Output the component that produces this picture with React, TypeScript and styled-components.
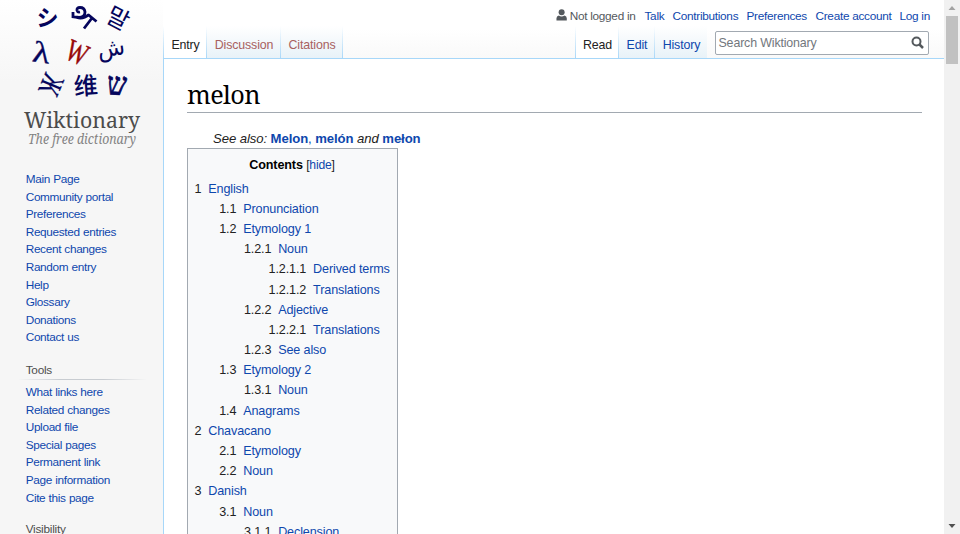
import React from "react";
import styled, { createGlobalStyle } from "styled-components";

const LINK = "#0e47ad";
const RED = "#a8615f";

const GlobalStyle = createGlobalStyle`
  * { box-sizing: border-box; }
  html, body { margin: 0; height: 534px; overflow: hidden; background: #fff; }
  body { font-family: "Liberation Sans", Arial, sans-serif; color: #222; }
`;

const Page = styled.div`
  display: flex;
  width: 960px;
  height: 534px;
  overflow: hidden;
  background: linear-gradient(#ffffff 0, #f6f6f6 82px);
`;

const Sidebar = styled.aside`
  flex: 0 0 163px;
  height: 534px;
  overflow: hidden;
`;

const Logo = styled.svg`
  display: block;
  width: 163px;
  height: 160px;
`;

const NavGroup = styled.nav<{ $top: number }>`
  display: flex;
  flex-direction: column;
  margin-top: ${(p) => p.$top}px;
  padding-left: 25.7px;
`;

const NavHeading = styled.h3`
  margin: 0 16px 4px -8px;
  padding-left: 8px;
  height: 19px;
  font-size: 11.8px;
  letter-spacing: -0.25px;
  font-weight: 400;
  line-height: 18px;
  color: #4d4d4d;
  background: linear-gradient(to right, rgba(200, 204, 209, 0), #c8ccd1 33%, #c8ccd1 66%, rgba(200, 204, 209, 0)) bottom / 100% 1px no-repeat;
`;

const NavLink = styled.a`
  height: 17.6px;
  font-size: 11.8px;
  line-height: 17.6px;
  letter-spacing: -0.33px;
  word-spacing: 0.3px;
  white-space: nowrap;
  color: ${LINK};
`;

const Main = styled.div`
  flex: 0 0 781px;
  display: flex;
  flex-direction: column;
`;

const Header = styled.header`
  flex: 0 0 58px;
  display: flex;
  flex-direction: column;
  background: linear-gradient(#ffffff 50%, #f9f9f9 100%);
`;

const Personal = styled.div`
  display: flex;
  justify-content: flex-end;
  height: 26px;
  padding: 8px 14.5px 0 0;
  gap: 9px;
  font-size: 11.8px;
  letter-spacing: -0.29px;
  line-height: 17px;
  color: ${LINK};
  white-space: nowrap;
`;

const PersonalItem = styled.span<{ $width: number; $muted?: boolean }>`
  display: flex;
  width: ${(p) => p.$width}px;
  color: ${(p) => (p.$muted ? "#54595d" : LINK)};
`;

const UserIcon = styled.svg`
  width: 12px;
  height: 13px;
  margin: 0 3px 0 0;
`;

const TabsBar = styled.div`
  display: flex;
  height: 32px;
`;

const Rule = styled.i`
  flex: 0 0 1px;
  height: 33px;
  background: linear-gradient(rgba(167, 215, 249, 0), #a7d7f9);
`;

const Tab = styled.a<{ $width: number; $active?: boolean; $color: string }>`
  flex: 0 0 ${(p) => p.$width}px;
  height: ${(p) => (p.$active ? 33 : 32)}px;
  padding: 10px 0 0 1px;
  text-align: center;
  font-size: 12.4px;
  letter-spacing: -0.14px;
  line-height: 18px;
  white-space: nowrap;
  color: ${(p) => p.$color};
  background: ${(p) => (p.$active ? "linear-gradient(#fff, #fff)" : "linear-gradient(#ffffff, #e8f2f8)")};
`;

const Spacer = styled.div`
  flex: 1;
`;

const Search = styled.div`
  display: flex;
  align-items: center;
  justify-content: space-between;
  width: 214px;
  height: 24px;
  margin: 5px 15px 0 8px;
  padding: 0 4px 1px 2.5px;
  border: 1px solid #a2a9b1;
  border-radius: 2px;
  background: #fff;
  font-size: 12.4px;
  letter-spacing: -0.14px;
  color: #72777d;
`;

const SearchIcon = styled.svg`
  width: 13px;
  height: 13px;
`;

const Content = styled.main`
  flex: 1;
  min-height: 0;
  overflow: hidden;
  padding: 17px 22px 0 23px;
  background: #fff;
  border-top: 1px solid #a7d7f9;
  border-left: 1px solid #a7d7f9;
`;

const Title = styled.h1`
  margin: 0;
  height: 37px;
  border-bottom: 1px solid #a2a9b1;
  font-family: "Noto Serif", "Liberation Serif", serif;
  font-weight: 400;
  font-size: 25.2px;
  letter-spacing: -0.6px;
  line-height: 37px;
  color: #000;
`;

const SeeAlso = styled.p`
  margin: 16px 0 0 26px;
  height: 19px;
  font-size: 13.13px;
  letter-spacing: -0.08px;
  line-height: 19px;
  font-style: italic;
  white-space: nowrap;

  b { font-style: normal; color: ${LINK}; }
  span { font-style: normal; color: ${LINK}; }
`;

const Toc = styled.section`
  width: 210.5px;
  height: 420px;
  padding: 7px 7px 0 6.5px;
  border: 1px solid #a2a9b1;
  background: #f8f9fa;
  font-size: 12.6px;
  letter-spacing: -0.13px;
`;

const TocTitle = styled.div`
  height: 22.6px;
  text-align: center;
  line-height: 19px;
  color: #000;

  small { font-size: 12.2px; letter-spacing: -0.2px; color: #222; }
  a { color: ${LINK}; }
`;

const TocRow = styled.div<{ $level: number }>`
  display: flex;
  height: 20.2px;
  padding-left: ${(p) => p.$level * 24.7}px;
  line-height: 21px;
  white-space: nowrap;
  color: #222;
  gap: 6.9px;

  a { color: ${LINK}; }
`;

const Scrollbar = styled.div`
  flex: 0 0 16px;
  display: flex;
  flex-direction: column;
  justify-content: space-between;
  background: #f1f1f1;
`;

const ScrollTop = styled.div`
  display: flex;
  flex-direction: column;
  align-items: center;
`;

const Thumb = styled.div`
  width: 12px;
  height: 48px;
  background: #c1c1c1;
`;

const Arrow = styled.svg`
  display: block;
  width: 16px;
  height: 16px;
`;

type Entry = [level: number, number: string, label: string];

const contents: Entry[] = [
  [0, "1", "English"],
  [1, "1.1", "Pronunciation"],
  [1, "1.2", "Etymology 1"],
  [2, "1.2.1", "Noun"],
  [3, "1.2.1.1", "Derived terms"],
  [3, "1.2.1.2", "Translations"],
  [2, "1.2.2", "Adjective"],
  [3, "1.2.2.1", "Translations"],
  [2, "1.2.3", "See also"],
  [1, "1.3", "Etymology 2"],
  [2, "1.3.1", "Noun"],
  [1, "1.4", "Anagrams"],
  [0, "2", "Chavacano"],
  [1, "2.1", "Etymology"],
  [1, "2.2", "Noun"],
  [0, "3", "Danish"],
  [1, "3.1", "Noun"],
  [2, "3.1.1", "Declension"],
];

const mainLinks = ["Main Page", "Community portal", "Preferences", "Requested entries", "Recent changes", "Random entry", "Help", "Glossary", "Donations", "Contact us"];
const toolLinks = ["What links here", "Related changes", "Upload file", "Special pages", "Permanent link", "Page information", "Cite this page"];

interface Glyph {
  char: string;
  x: number;
  y: number;
  size: number;
  angle: number;
  font: string;
  weight?: number;
  fill?: string;
  stretch?: [number, number];
  outline?: number;
}

const NAVY = "#05055c";
const glyphs: Glyph[] = [
  { char: "シ", x: 47.5, y: 18.5, size: 23, angle: 4, font: '"Noto Sans CJK JP", sans-serif', weight: 700, stretch: [0.95, 1] },
  { char: "말", x: 118, y: 18.5, size: 24, angle: 27, font: '"Noto Sans CJK KR", sans-serif' },
  { char: "λ", x: 41.5, y: 52, size: 30, angle: 8, font: '"Liberation Serif", serif', outline: 0.3, stretch: [1.2, 1] },
  { char: "W", x: 77.5, y: 52, size: 25, angle: 24, font: '"Liberation Serif", serif', fill: "#980808", stretch: [0.9, 1.25], outline: 0.4 },
  { char: "ش", x: 111, y: 47.5, size: 25, angle: -8, font: '"DejaVu Sans", sans-serif', stretch: [0.9, 0.95] },
  { char: "Ж", x: 52, y: 85, size: 25, angle: 113, font: '"Liberation Serif", serif', stretch: [0.9, 1.25], outline: 0.2 },
  { char: "维", x: 86, y: 86, size: 24, angle: -4, font: '"Noto Sans CJK SC", sans-serif', weight: 500 },
  { char: "ש", x: 117, y: 83.5, size: 29, angle: 3, font: '"Liberation Serif", serif', outline: 0.7, stretch: [0.95, 1.1] },
];

function WikiLogo() {
  return (
    <Logo viewBox="0 0 163 160">
      {glyphs.map((g) => (
        <text
          key={g.char}
          x={0}
          y={g.size * 0.35}
          transform={`translate(${g.x} ${g.y}) rotate(${g.angle}) scale(${(g.stretch ?? [1, 1]).join(" ")})`}
          textAnchor="middle"
          fontFamily={g.font}
          fontSize={g.size}
          fontWeight={g.weight ?? 400}
          fill={g.fill ?? NAVY}
          stroke={g.fill ?? NAVY}
          strokeWidth={g.outline ?? 0}
        >
          {g.char}
        </text>
      ))}
      <g fill="none" stroke={NAVY} strokeWidth="2.8">
        <path d="M73 12v6M72 16.500l7 1q6-.5 6-5.500q-.5-4.500-5-4.500q-3.500 0-3 3q.5 2 3 1.500" />
        <path d="M77 17.500q6 2 12-3M88 14.500l8.500 7M92 18l-8 10.500" />
      </g>
      <text x="24" y="127.5" fontFamily='"Noto Serif", "Liberation Serif", serif' fontSize="22" fill="#4c4c4c" textLength="116" lengthAdjust="spacingAndGlyphs">Wiktionary</text>
      <text x="28" y="143.500" fontFamily='"Noto Serif", "Liberation Serif", serif' fontStyle="italic" fontSize="14" fill="#848484" textLength="108" lengthAdjust="spacingAndGlyphs">The free dictionary</text>
    </Logo>
  );
}

export default function App() {
  return (
    <>
      <GlobalStyle />
      <Page>
        <Sidebar>
          <WikiLogo />
          <NavGroup $top={11}>
            {mainLinks.map((label) => <NavLink key={label}>{label}</NavLink>)}
          </NavGroup>
          <NavGroup $top={14}>
            <NavHeading>Tools</NavHeading>
            {toolLinks.map((label) => <NavLink key={label}>{label}</NavLink>)}
          </NavGroup>
          <NavGroup $top={13}>
            <NavHeading>Visibility</NavHeading>
          </NavGroup>
        </Sidebar>
        <Main>
          <Header>
            <Personal>
              <PersonalItem $width={80} $muted>
                <UserIcon viewBox="0 0 12 13" fill="#54595d">
                  <circle cx="6" cy="4" r="3.200" />
                  <path d="M.5 13V10.500Q.5 8 3 7.500Q6 9.500 9 7.500Q11.500 8 11.500 10.500V13Z" />
                </UserIcon>
                Not logged in
              </PersonalItem>
              <PersonalItem $width={19}>Talk</PersonalItem>
              <PersonalItem $width={65}>Contributions</PersonalItem>
              <PersonalItem $width={60}>Preferences</PersonalItem>
              <PersonalItem $width={75}>Create account</PersonalItem>
              <PersonalItem $width={30}>Log in</PersonalItem>
            </Personal>
            <TabsBar>
              <Rule />
              <Tab $width={42} $active $color="#222">Entry</Tab>
              <Rule />
              <Tab $width={73} $color={RED}>Discussion</Tab>
              <Rule />
              <Tab $width={61} $color={RED}>Citations</Tab>
              <Rule />
              <Spacer />
              <Rule />
              <Tab $width={42} $active $color="#222">Read</Tab>
              <Rule />
              <Tab $width={35} $color={LINK}>Edit</Tab>
              <Rule />
              <Tab $width={52} $color={LINK}>History</Tab>
              <Search>
                Search Wiktionary
                <SearchIcon viewBox="0 0 13 13" fill="none" stroke="#54595d" strokeWidth="2">
                  <circle cx="5.500" cy="5.500" r="4" />
                  <path d="M8.500 8.500L12 12" strokeWidth="2.500" />
                </SearchIcon>
              </Search>
            </TabsBar>
          </Header>
          <Content>
            <Title>melon</Title>
            <SeeAlso>See also: <b>Melon</b><span>, </span><b>melón</b> and <b>mełon</b></SeeAlso>
            <Toc>
              <TocTitle><b>Contents</b> <small>[<a>hide</a>]</small></TocTitle>
              {contents.map(([level, number, label]) => (
                <TocRow key={number} $level={level}><span>{number}</span><a>{label}</a></TocRow>
              ))}
            </Toc>
          </Content>
        </Main>
        <Scrollbar>
          <ScrollTop>
            <Arrow viewBox="0 0 16 16"><path d="M4.500 10L8 6l3.500 4Z" fill="#a3a3a3" /></Arrow>
            <Thumb />
          </ScrollTop>
          <Arrow viewBox="0 0 16 16"><path d="M4.500 6L8 10l3.500-4Z" fill="#505050" /></Arrow>
        </Scrollbar>
      </Page>
    </>
  );
}
